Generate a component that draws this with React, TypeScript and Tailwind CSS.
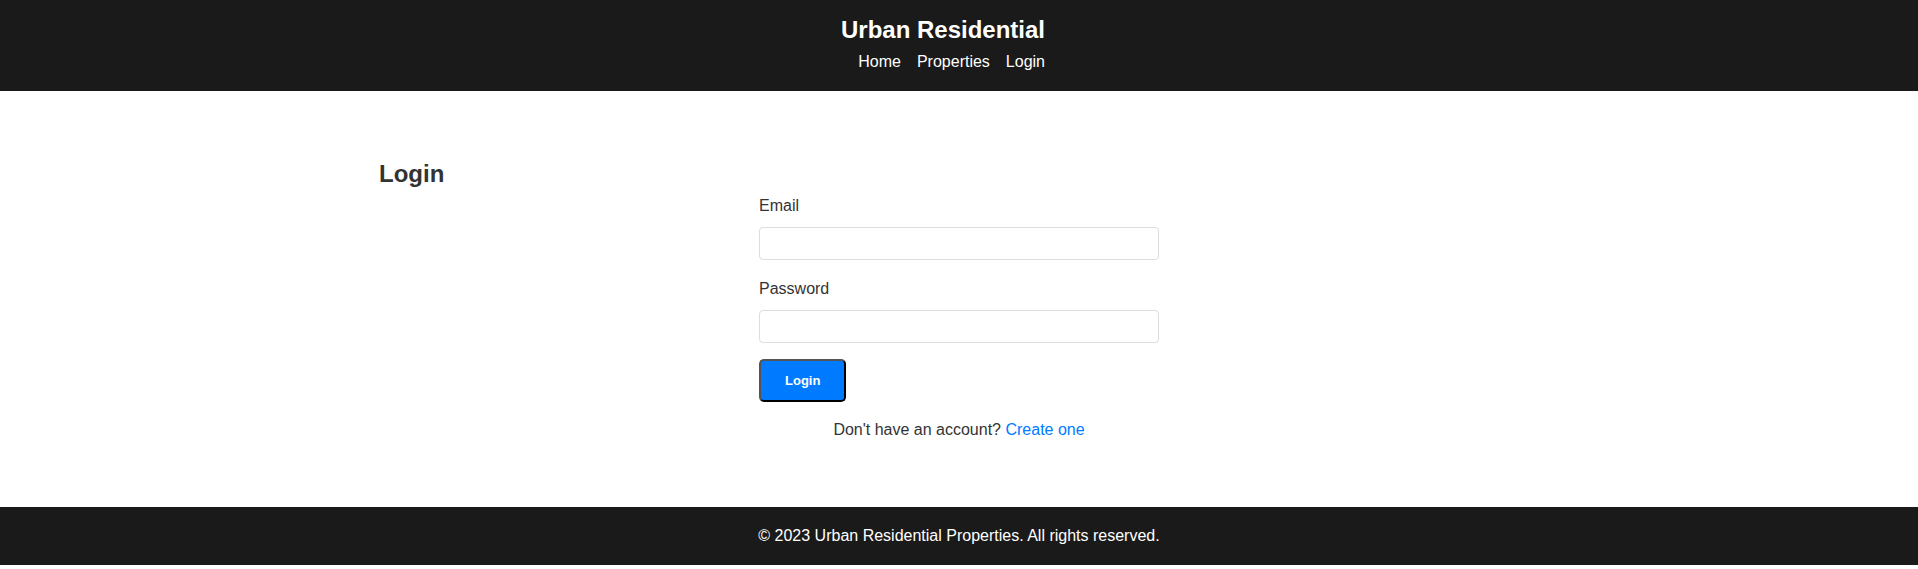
import React from "react";

const navLinks = ["Home", "Properties", "Login"];

const fields = [
  { id: "email", label: "Email", type: "email" },
  { id: "password", label: "Password", type: "password" },
];

export default function App() {
  return (
    <div className="bg-white font-['Liberation_Sans',Arial,sans-serif] text-base leading-[26px] text-[#333]">
      <header className="flex flex-col items-center bg-[#1a1a1a] pt-[11px] pb-4 text-white">
        <div className="flex flex-col pr-8">
          <h1 className="text-2xl leading-[38px] font-bold">Urban Residential</h1>
          <nav>
            <ul className="flex justify-end gap-4">
              {navLinks.map((name) => (
                <li key={name}>
                  <a href="#">{name}</a>
                </li>
              ))}
            </ul>
          </nav>
        </div>
      </header>

      <main className="mx-auto max-w-[1160px] py-16">
        <h2 className="text-2xl leading-[38px] font-bold">Login</h2>
        <form className="mx-auto max-w-[400px]" onSubmit={(e) => e.preventDefault()}>
          {fields.map((field) => (
            <div key={field.id} className="mb-4">
              <label htmlFor={field.id} className="mb-2 block">
                {field.label}
              </label>
              <input
                id={field.id}
                type={field.type}
                className="block w-full rounded border border-[#ddd] p-2 text-[13px] leading-[15px]"
              />
            </div>
          ))}
          <button
            type="submit"
            className="block rounded-[5px] border-2 border-black bg-[#007bff] px-6 py-3 text-[13px] leading-[15px] font-bold text-white [border-style:outset]"
          >
            Login
          </button>
        </form>
        <p className="mt-[15px] text-center">
          Don't have an account?{" "}
          <a href="#" className="text-[#007bff]">
            Create one
          </a>
        </p>
      </main>

      <footer className="bg-[#1a1a1a] py-4 text-center text-white">
        <p>© 2023 Urban Residential Properties. All rights reserved.</p>
      </footer>
    </div>
  );
}
